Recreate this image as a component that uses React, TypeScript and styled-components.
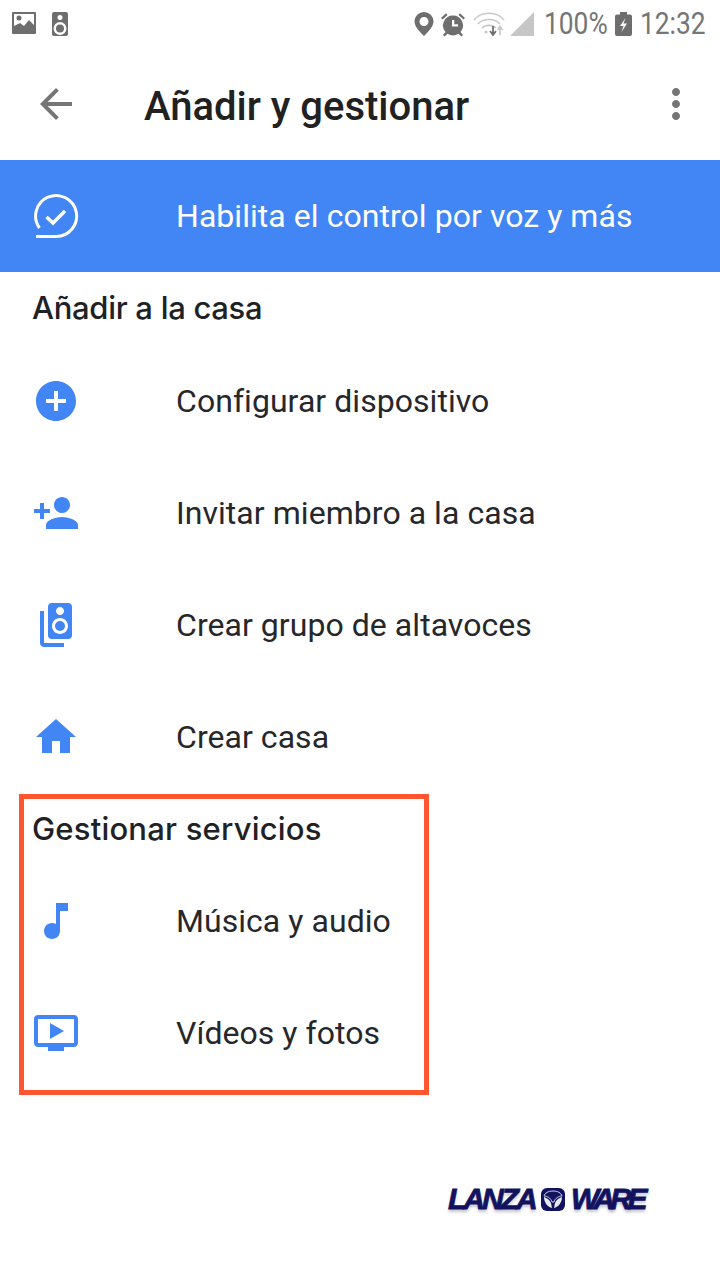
import React from 'react'
import styled, { createGlobalStyle } from 'styled-components'

const GlobalStyle = createGlobalStyle`
  html, body {
    margin: 0;
    padding: 0;
    background: #fff;
  }
  body {
    font-family: Roboto, "Liberation Sans", sans-serif;
    color: #212121;
  }
`

const Page = styled.div`
  width: 720px;
  height: 1280px;
  overflow: hidden;
  background: #fff;
`

const StatusBar = styled.div`
  height: 48px;
  display: flex;
  align-items: center;
  padding: 0 14px 0 12px;
  box-sizing: border-box;
  color: #6e6e6e;
`

const StatusLeft = styled.div`
  display: flex;
  align-items: center;
  gap: 16px;
  flex: 1;
`

const StatusRight = styled.div`
  display: flex;
  align-items: center;
`

const StatusIcon = styled.svg<{ $gap?: number }>`
  display: block;
  margin-left: ${(p) => p.$gap ?? 0}px;
  fill: currentColor;
`

const StatusText = styled.span<{ $gap: number; $width: number }>`
  display: block;
  width: ${(p) => p.$width}px;
  margin-left: ${(p) => p.$gap}px;
  font-size: 31px;
  line-height: 48px;
  white-space: nowrap;
  color: #757575;
  transform: scaleX(0.85);
  transform-origin: left center;
`

const Toolbar = styled.header`
  height: 112px;
  display: flex;
  align-items: center;
  padding: 0 20px 0 32px;
`

const ToolbarIcon = styled.svg`
  width: 48px;
  height: 48px;
  flex: none;
  fill: #757575;
`

const Title = styled.h1`
  flex: 1;
  margin: 0 0 0 64px;
  padding-top: 4px;
  font-size: 40px;
  font-weight: 500;
  color: #212121;
`

const Banner = styled.div`
  height: 112px;
  display: flex;
  align-items: center;
  padding-left: 32px;
  background: #4285f4;
  color: #fff;
`

const RowIcon = styled.svg`
  width: 48px;
  height: 48px;
  flex: none;
  fill: #4285f4;
`

const RowLabel = styled.span`
  margin-left: 96px;
  font-size: 32px;
  line-height: 48px;
  letter-spacing: 0.05px;
  color: #26272b;
`

const BannerLabel = styled(RowLabel)`
  color: #fff;
`

const SectionTitle = styled.h2<{ $height: number; $inset: number; $tracking: number }>`
  display: flex;
  align-items: center;
  height: ${(p) => p.$height}px;
  margin: 0 0 0 -1px;
  padding-bottom: ${(p) => p.$inset}px;
  box-sizing: border-box;
  font-family: Inter, Roboto, sans-serif;
  font-size: 31px;
  font-weight: 500;
  letter-spacing: ${(p) => p.$tracking}px;
  color: #202124;
`

const Section = styled.section`
  padding-left: 33px;
`

const Row = styled.div`
  height: 112px;
  display: flex;
  align-items: center;
  margin-left: -1px;
`

const HighlightBox = styled.section`
  width: 410px;
  height: 301px;
  box-sizing: border-box;
  margin: 1px 0 0 19px;
  padding-left: 9px;
  border: 5px solid #ff5630;
`

const Footer = styled.footer`
  display: flex;
  align-items: center;
  margin: 90px 0 0 448px;
  color: #12125f;
  font-family: "Liberation Sans", Arial, sans-serif;
  font-size: 30px;
  font-style: italic;
  font-weight: 700;
  line-height: 28px;
  text-shadow: 0 3px 3px rgba(90, 90, 120, 0.35);
  -webkit-text-stroke: 0.8px #12125f;
`

const LogoWord = styled.span<{ $spacing: number; $width: number }>`
  display: block;
  width: ${(p) => p.$width}px;
  white-space: nowrap;
  letter-spacing: ${(p) => p.$spacing}px;
`

const Emblem = styled.svg`
  width: 24px;
  height: 23px;
  margin: 0 6px 0 4px;
  flex: none;
`

type RowData = { label: string; icon: React.ReactNode }

const addRows: RowData[] = [
  {
    label: 'Configurar dispositivo',
    icon: <path d="M12 2C6.48 2 2 6.48 2 12s4.48 10 10 10 10-4.48 10-10S17.52 2 12 2zm5 11h-4v4h-2v-4H7v-2h4V7h2v4h4v2z" />,
  },
  {
    label: 'Invitar miembro a la casa',
    icon: <path d="M15 12c2.21 0 4-1.79 4-4s-1.79-4-4-4-4 1.79-4 4 1.79 4 4 4zm-9-2V7H4v3H1v2h3v3h2v-3h3v-2H6zm9 4c-2.67 0-8 1.34-8 4v2h16v-2c0-2.66-5.33-4-8-4z" />,
  },
  {
    label: 'Crear grupo de altavoces',
    icon: (
      <>
        <path d="M18.2 1H9.8C8.81 1 8 1.81 8 2.8v14.4c0 .99.81 1.79 1.8 1.79l8.4.01c.99 0 1.8-.81 1.8-1.8V2.8c0-.99-.81-1.8-1.8-1.8zM14 3c1.1 0 2 .89 2 2s-.9 2-2 2-2-.89-2-2 .9-2 2-2zm0 13.5c-2.21 0-4-1.79-4-4s1.79-4 4-4 4 1.79 4 4-1.79 4-4 4z" />
        <circle cx="14" cy="12.5" r="2.5" />
        <path d="M6 5H4v16c0 1.1.89 2 2 2h10v-2H6V5z" />
      </>
    ),
  },
  {
    label: 'Crear casa',
    icon: <path d="M10 20v-6h4v6h5v-8h3L12 3 2 12h3v8z" />,
  },
]

const serviceRows: RowData[] = [
  {
    label: 'Música y audio',
    icon: <path d="M12 3v10.55c-.59-.34-1.27-.55-2-.55-2.21 0-4 1.79-4 4s1.79 4 4 4 4-1.79 4-4V7h4V3h-6z" />,
  },
  {
    label: 'Vídeos y fotos',
    icon: <path d="M21 3H3c-1.11 0-2 .89-2 2v12c0 1.1.89 2 2 2h5v2h8v-2h5c1.1 0 1.99-.9 1.99-2L23 5c0-1.11-.9-2-2-2zm0 14H3V5h18v12zM16 11l-7 4V7z" />,
  },
]

const ListRow = ({ label, icon }: RowData) => (
  <Row>
    <RowIcon viewBox="0 0 24 24">{icon}</RowIcon>
    <RowLabel>{label}</RowLabel>
  </Row>
)

export default function App() {
  return (
    <Page>
      <GlobalStyle />
      <StatusBar>
        <StatusLeft>
          <StatusIcon width="24" height="24" viewBox="0 0 24 24">
            <path fillRule="evenodd" d="M1 0h22a1 1 0 0 1 1 1v20a1 1 0 0 1-1 1H1a1 1 0 0 1-1-1V1a1 1 0 0 1 1-1zm1 2v12l6-3 4 3 5-6 5 5V2H2zm5 1.5a2.5 2.5 0 1 1 0 5 2.5 2.5 0 0 1 0-5z" />
          </StatusIcon>
          <StatusIcon width="16" height="24" viewBox="0 0 16 24">
            <path fillRule="evenodd" d="M2 0h12a2 2 0 0 1 2 2v20a2 2 0 0 1-2 2H2a2 2 0 0 1-2-2V2a2 2 0 0 1 2-2zm6 3a2.5 2.5 0 1 0 0 5 2.5 2.5 0 0 0 0-5zm0 7a6.5 6.5 0 1 0 0 13 6.5 6.5 0 0 0 0-13zm0 2.5a4 4 0 1 1 0 8 4 4 0 0 1 0-8z" />
          </StatusIcon>
        </StatusLeft>
        <StatusRight>
          <StatusIcon width="20" height="24" viewBox="0 0 20 24">
            <path fillRule="evenodd" d="M10 0a9.5 9.5 0 0 1 9.5 9.5C19.500 15 13 21 10 24 7 21 .5 15 .5 9.500A9.500 9.500 0 0 1 10 0zm0 5a4.500 4.500 0 1 0 0 9 4.500 4.500 0 0 0 0-9z" />
          </StatusIcon>
          <StatusIcon $gap={6} width="26" height="25" viewBox="0 0 26 25">
            <path fillRule="evenodd" d="M13 3.500a10 10 0 0 1 7.500 16.600L23 23l-1.500 1.500-3-2.700a10 10 0 0 1-11 0l-3 2.700L3 23l2.500-2.900A10 10 0 0 1 13 3.500zM12 8v6.500h6v-2.200h-3.700V8H12zM1 6l5-4.800L7.500 3 2.500 7.500 1 6zm24 0-1.500 1.500-5-4.500L20 1.200 25 6z" />
          </StatusIcon>
          <StatusIcon $gap={7} width="32" height="24" viewBox="0 0 32 24" style={{ fill: 'none' }}>
            <g stroke="#c8c8c8" strokeWidth="1.600" fill="none">
              <path d="M1 8C8-1 24-1 31 8" />
              <path d="M5 12c5-6 17-6 22 0" />
              <path d="M9 16c3-3.500 11-3.500 14 0" />
            </g>
            <circle cx="13" cy="20" r="1.500" fill="#c8c8c8" />
            <path d="M20 14v8m-3-3 3 4 3-4" stroke="#6e6e6e" strokeWidth="1.800" fill="none" />
            <path d="M27 23v-8m-2.500 3 2.500-3.500 2.500 3.500" stroke="#c8c8c8" strokeWidth="1.600" fill="none" />
          </StatusIcon>
          <StatusIcon $gap={5} width="24" height="24" viewBox="0 0 24 24" style={{ fill: '#c6c6c6' }}>
            <path d="M24 0v24H0z" />
          </StatusIcon>
          <StatusText $gap={10} $width={62}>100%</StatusText>
          <StatusIcon $gap={9} width="17" height="24" viewBox="0 0 17 24">
            <path fillRule="evenodd" d="M5 0h7v2.500h3a2 2 0 0 1 2 2V22a2 2 0 0 1-2 2H2a2 2 0 0 1-2-2V4.500a2 2 0 0 1 2-2h3V0zm5.500 6L5 14h3.500l-2 6L12 11.500H8.500l2-5.500z" />
          </StatusIcon>
          <StatusText $gap={8} $width={66}>12:32</StatusText>
        </StatusRight>
      </StatusBar>

      <Toolbar>
        <ToolbarIcon viewBox="0 0 24 24">
          <path d="M20 11H7.830l5.590-5.590L12 4l-8 8 8 8 1.410-1.410L7.830 13H20v-2z" />
        </ToolbarIcon>
        <Title>Añadir y gestionar</Title>
        <ToolbarIcon viewBox="0 0 24 24">
          <path d="M12 8c1.100 0 2-.9 2-2s-.9-2-2-2-2 .9-2 2 .9 2 2 2zm0 2c-1.100 0-2 .9-2 2s.9 2 2 2 2-.9 2-2-.9-2-2-2zm0 6c-1.100 0-2 .9-2 2s.9 2 2 2 2-.9 2-2-.9-2-2-2z" />
        </ToolbarIcon>
      </Toolbar>

      <Banner>
        <svg width="48" height="48" viewBox="0 0 48 48" fill="none" stroke="#fff" strokeWidth="3">
          <path d="M7.500 36A20.500 20.500 0 1 1 24 44.500H4" />
          <path d="M14.500 25l6.500 6 12-12" strokeWidth="3.500" />
        </svg>
        <BannerLabel>Habilita el control por voz y más</BannerLabel>
      </Banner>

      <Section>
        <SectionTitle $height={73} $inset={2} $tracking={-0.3}>Añadir a la casa</SectionTitle>
        {addRows.map((row) => (
          <ListRow key={row.label} {...row} />
        ))}
      </Section>

      <HighlightBox>
        <SectionTitle $height={66} $inset={8} $tracking={0.2}>Gestionar servicios</SectionTitle>
        {serviceRows.map((row) => (
          <ListRow key={row.label} {...row} />
        ))}
      </HighlightBox>

      <Footer>
        <LogoWord $spacing={-3} $width={89}>LANZA</LogoWord>
        <Emblem viewBox="0 0 24 23">
          <rect width="24" height="23" rx="6" fill="#12125f" />
          <path d="M12 3c5 0 8 2 9 5-3 0-7 2-8 6h-2C10 10 6 8 3 8c1-3 4-5 9-5z" fill="#12125f" stroke="#cfd2e6" strokeWidth="1" />
          <path d="M3 9c3 1 6 3 7 6l1 5c-4-1-8-5-8-11zm18 0c-3 1-6 3-7 6l-1 5c4-1 8-5 8-11z" fill="#e6e8f2" />
        </Emblem>
        <LogoWord $spacing={-4.5} $width={74}>WARE</LogoWord>
      </Footer>
    </Page>
  )
}
